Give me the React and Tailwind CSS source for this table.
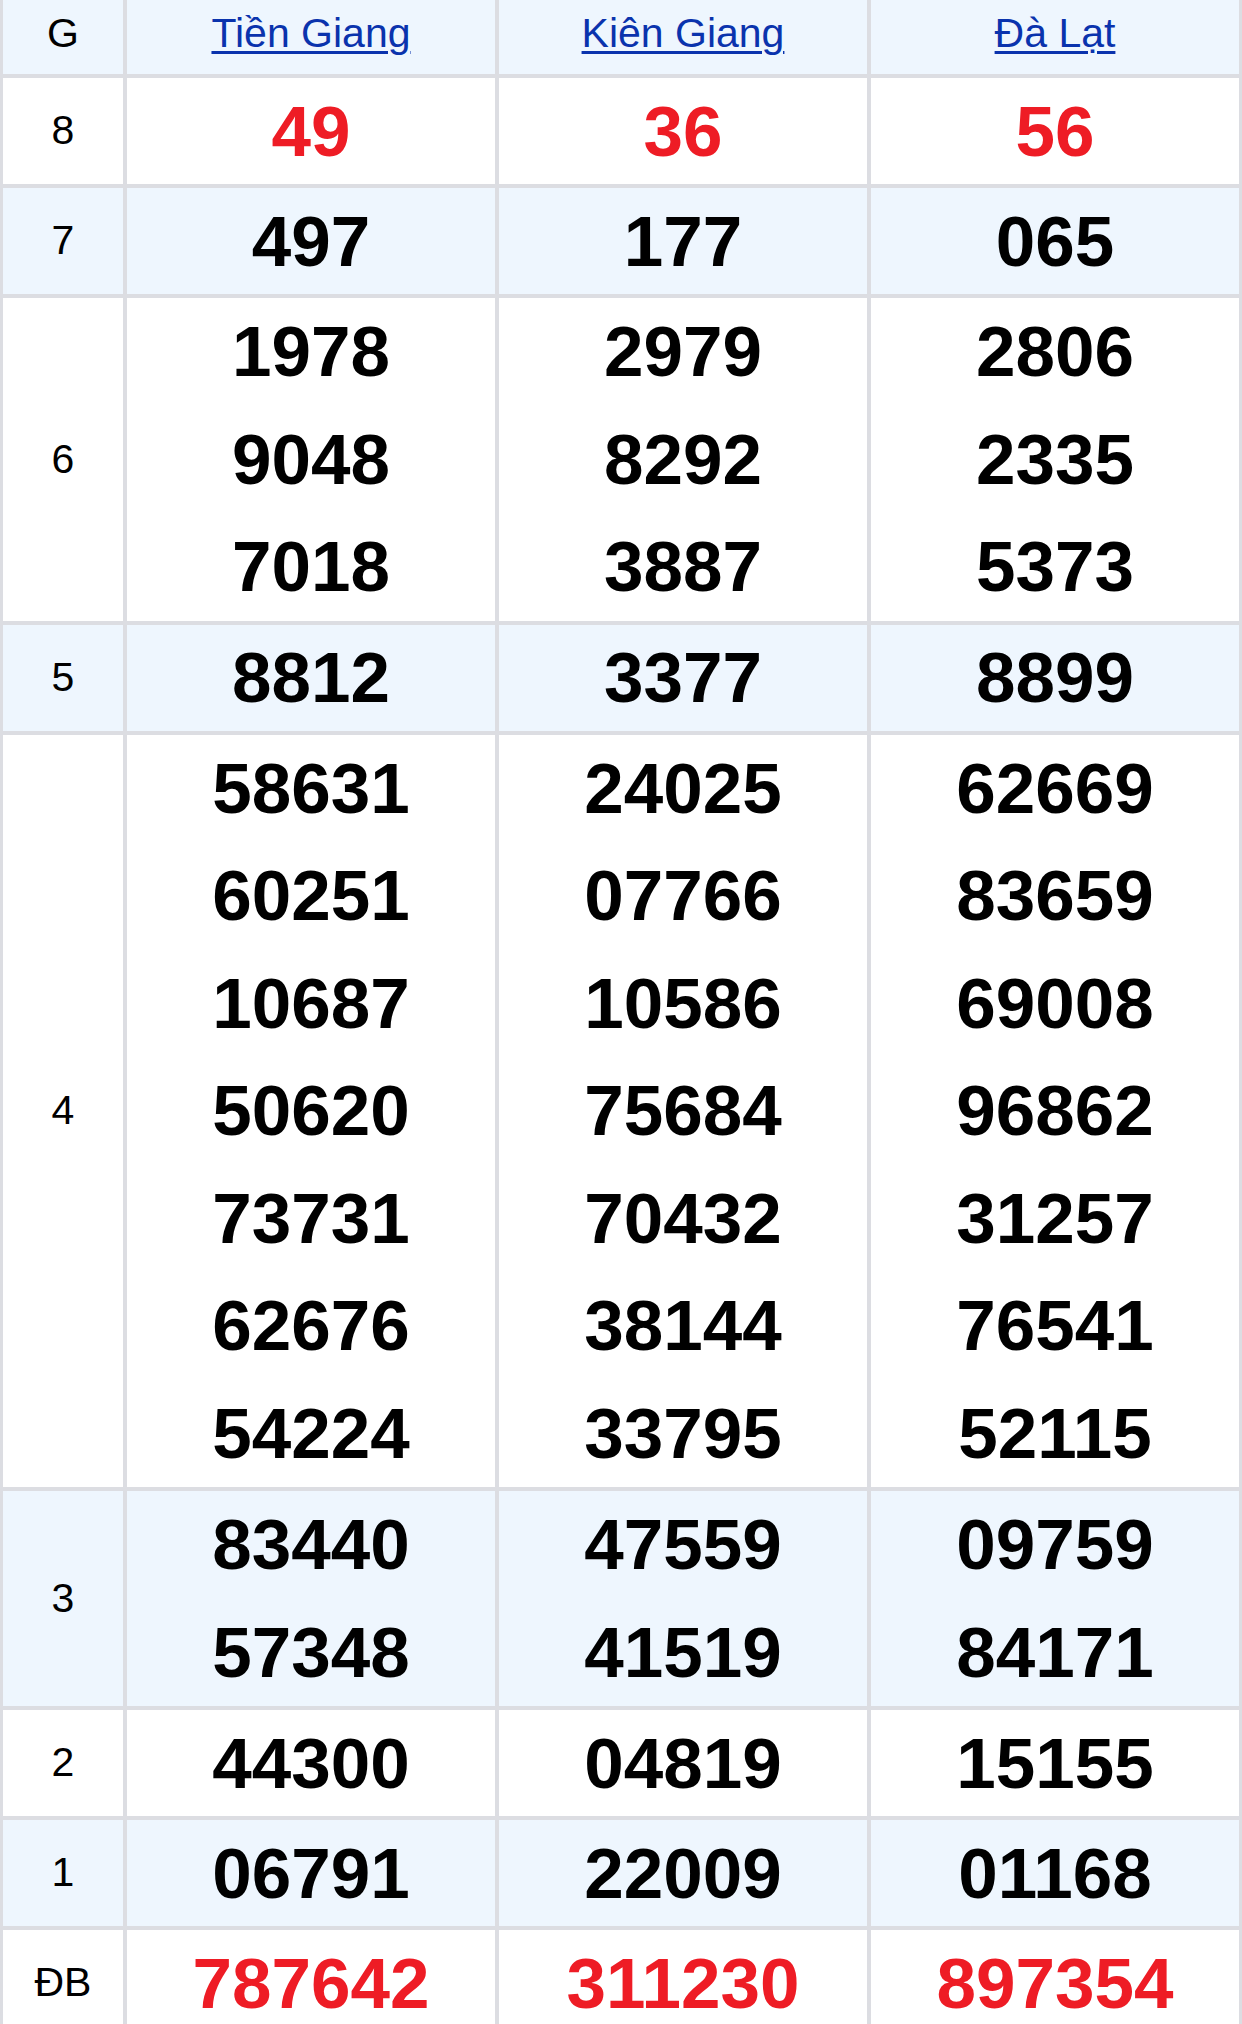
import React from "react";

const BLUE = "bg-[#eef6fe]";
const WHITE = "bg-white";

const rows = [
  { label: "8", bg: WHITE, red: true, vals: [["49"], ["36"], ["56"]] },
  { label: "7", bg: BLUE, vals: [["497"], ["177"], ["065"]] },
  {
    label: "6",
    bg: WHITE,
    vals: [
      ["1978", "9048", "7018"],
      ["2979", "8292", "3887"],
      ["2806", "2335", "5373"],
    ],
  },
  { label: "5", bg: BLUE, vals: [["8812"], ["3377"], ["8899"]] },
  {
    label: "4",
    bg: WHITE,
    vals: [
      ["58631", "60251", "10687", "50620", "73731", "62676", "54224"],
      ["24025", "07766", "10586", "75684", "70432", "38144", "33795"],
      ["62669", "83659", "69008", "96862", "31257", "76541", "52115"],
    ],
  },
  {
    label: "3",
    bg: BLUE,
    vals: [
      ["83440", "57348"],
      ["47559", "41519"],
      ["09759", "84171"],
    ],
  },
  { label: "2", bg: WHITE, vals: [["44300"], ["04819"], ["15155"]] },
  { label: "1", bg: BLUE, vals: [["06791"], ["22009"], ["01168"]] },
  { label: "ĐB", bg: WHITE, red: true, vals: [["787642"], ["311230"], ["897354"]] },
];

function NumCell({ nums, bg, red }) {
  const single = nums.length === 1;
  return (
    <div className={`${bg} flex flex-col`}>
      {nums.map((n, i) => (
        <div
          key={i}
          className={`${single ? "h-[106px]" : "h-[107.5px]"} flex items-center justify-center text-[71px] font-bold leading-none ${
            red ? "text-[#ee1c25]" : "text-black"
          }`}
        >
          {n}
        </div>
      ))}
    </div>
  );
}

export default function App() {
  return (
    <div className="w-[1242px] bg-[#dcdde2] px-[3px] font-['Liberation_Sans',Arial,sans-serif]">
      <div className="grid grid-cols-[120px_368px_368px_368px] gap-[4px]">
        <div className={`${BLUE} h-[74px] flex items-center justify-center pb-[6px] text-[41px] text-black`}>
          G
        </div>
        {["Tiền Giang", "Kiên Giang", "Đà Lạt"].map((t) => (
          <div
            key={t}
            className={`${BLUE} h-[74px] flex items-center justify-center pb-[6px]`}
          >
            <a href="#" className="text-[41px] text-[#0a33ad] underline decoration-[3px] underline-offset-[4px]">
              {t}
            </a>
          </div>
        ))}
        {rows.map((r) => (
          <React.Fragment key={r.label}>
            <div className={`${r.bg} flex items-center justify-center text-[41px] text-black`}>
              {r.label}
            </div>
            {r.vals.map((v, i) => (
              <NumCell key={i} nums={v} bg={r.bg} red={r.red} />
            ))}
          </React.Fragment>
        ))}
      </div>
    </div>
  );
}
